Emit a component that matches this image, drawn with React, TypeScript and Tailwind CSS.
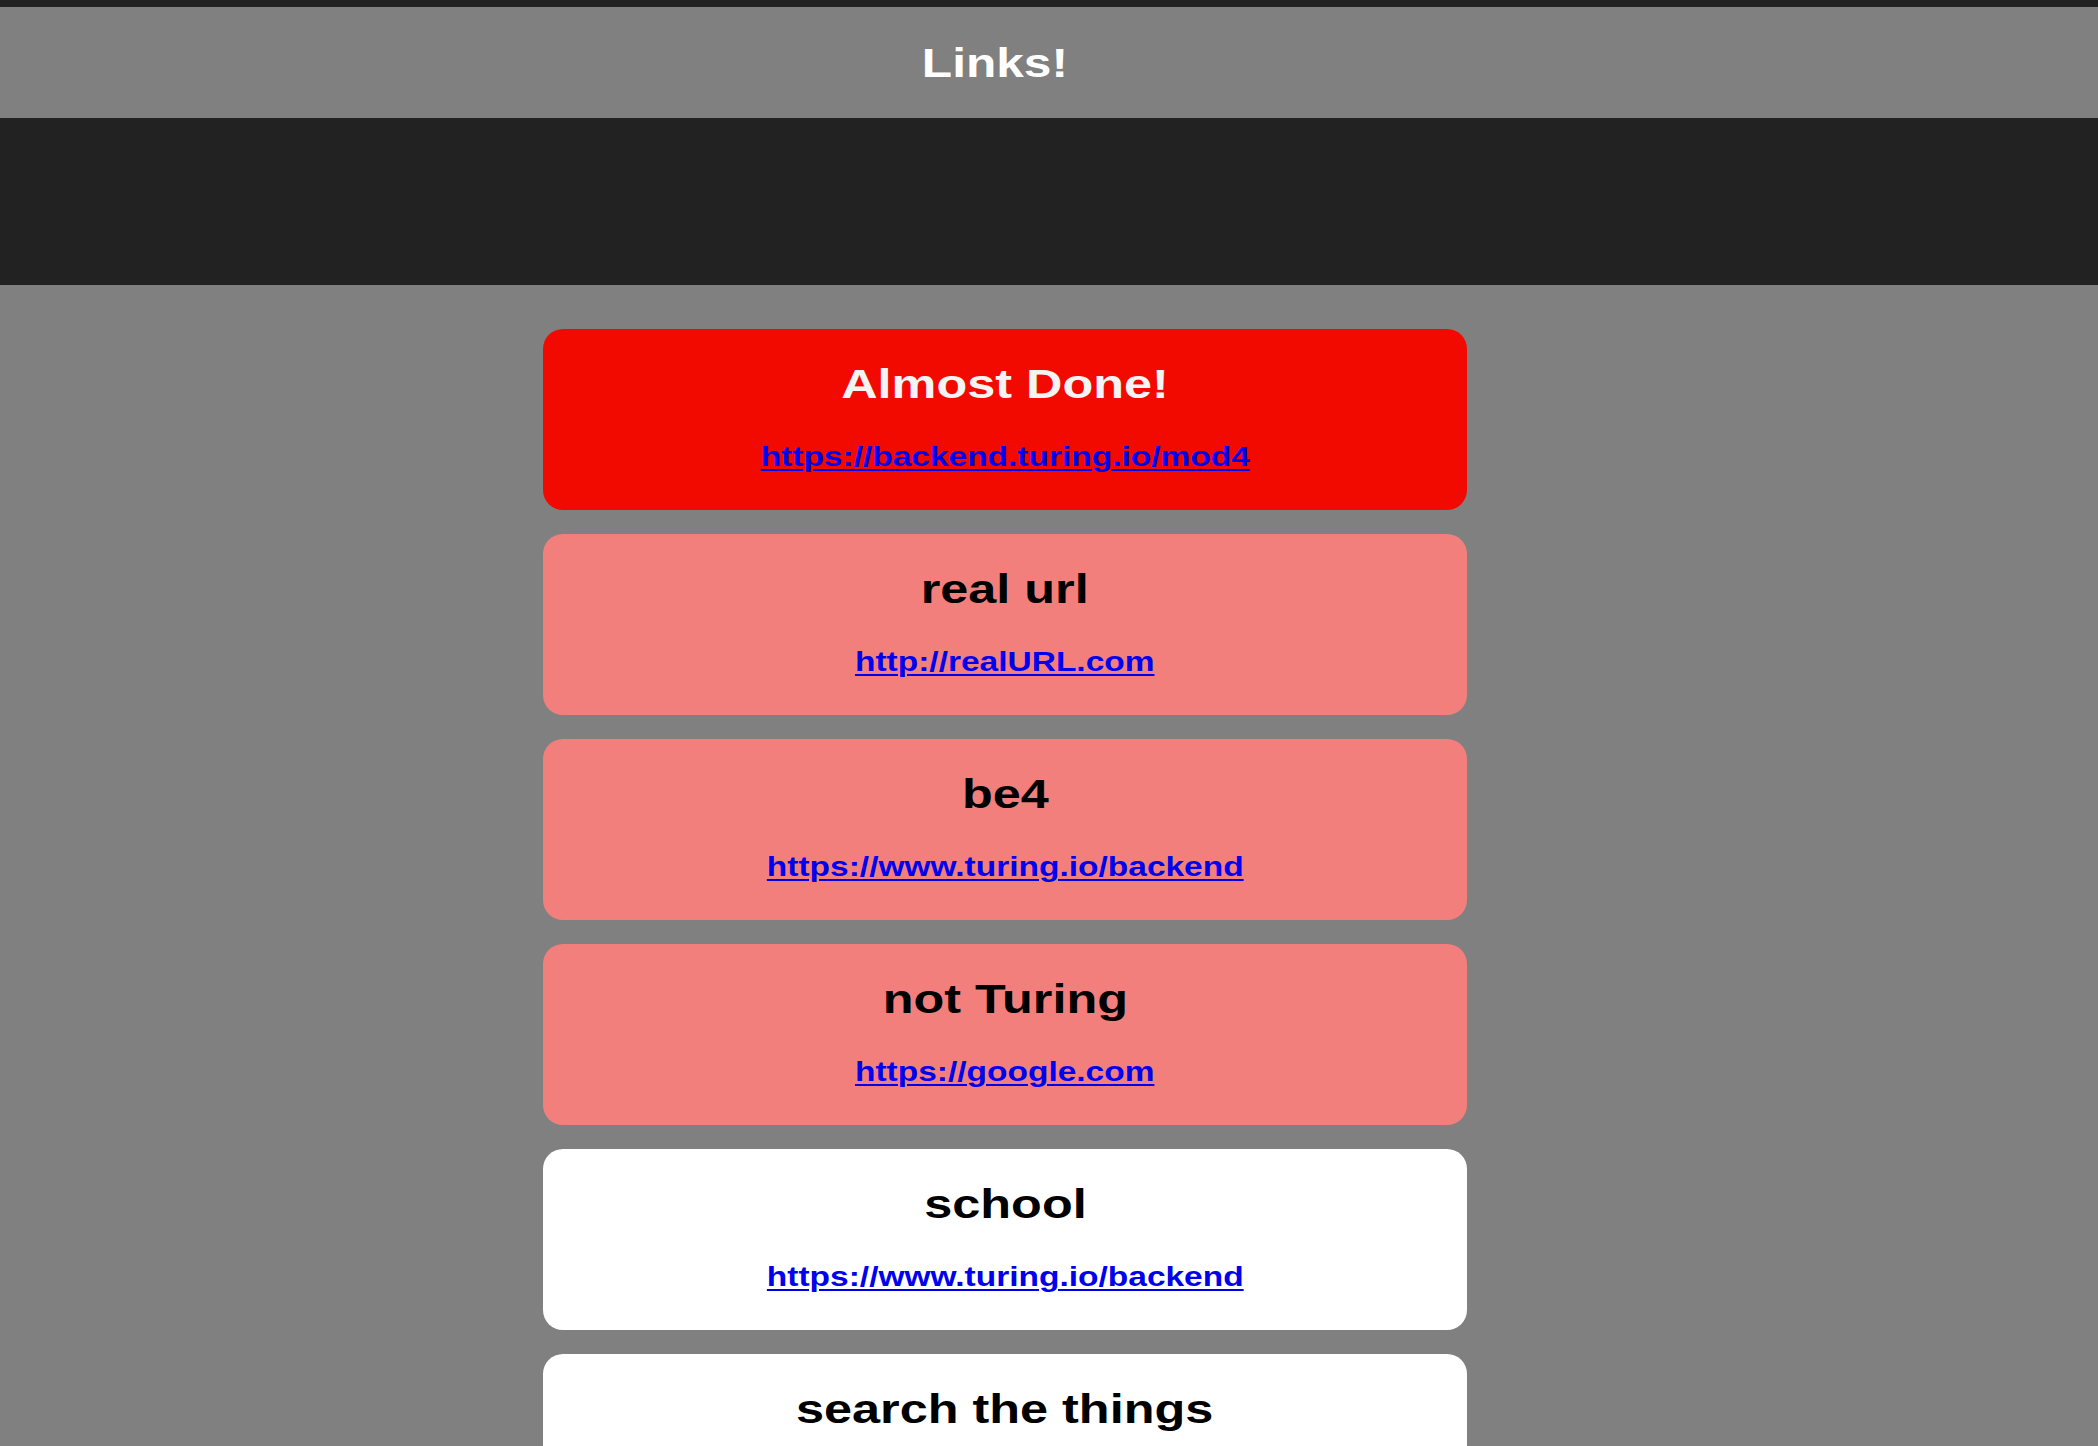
import React from "react";

type Item = { title: string; url: string; tone: "red" | "pink" | "white" };

const items: Item[] = [
  { title: "Almost Done!", url: "https://backend.turing.io/mod4", tone: "red" },
  { title: "real url", url: "http://realURL.com", tone: "pink" },
  { title: "be4", url: "https://www.turing.io/backend", tone: "pink" },
  { title: "not Turing", url: "https://google.com", tone: "pink" },
  { title: "school", url: "https://www.turing.io/backend", tone: "white" },
  { title: "search the things", url: "https://google.com", tone: "white" },
];

function Card({ item }: { item: Item }) {
  const bg =
    item.tone === "red"
      ? "bg-[#f20a00]"
      : item.tone === "pink"
      ? "bg-[#f37f7c]"
      : "bg-white";
  const titleColor = item.tone === "red" ? "text-[#f4f4f4]" : "text-black";
  return (
    <div
      className={`${bg} w-[924px] h-[181px] rounded-[20px] flex flex-col items-center pt-[35px]`}
    >
      <h2
        className={`${titleColor} inline-block text-[40px] leading-none font-bold scale-x-[1.26]`}
      >
        {item.title}
      </h2>
      <a
        href={item.url}
        className="mt-[40px] inline-block text-[27px] leading-none font-bold text-[#0000ee] underline decoration-2 underline-offset-[3px] scale-x-[1.24]"
      >
        {item.url}
      </a>
    </div>
  );
}

export default function App() {
  return (
    <div
      className="min-h-[1446px] bg-[#808080]"
      style={{ fontFamily: '"Liberation Sans", Arial, sans-serif' }}
    >
      <div className="h-[7px] bg-[#222222]" />
      <header className="h-[111px] bg-[#808080] flex items-center justify-center pr-[108px]">
        <h1 className="inline-block text-white text-[40px] leading-none font-bold scale-x-[1.24]">
          Links!
        </h1>
      </header>
      <div className="h-[167px] bg-[#222222]" />
      <main className="flex flex-col items-center gap-[24px] pt-[44px] pb-[40px] pr-[88px]">
        {items.map((it, i) => (
          <Card key={i} item={it} />
        ))}
      </main>
    </div>
  );
}
